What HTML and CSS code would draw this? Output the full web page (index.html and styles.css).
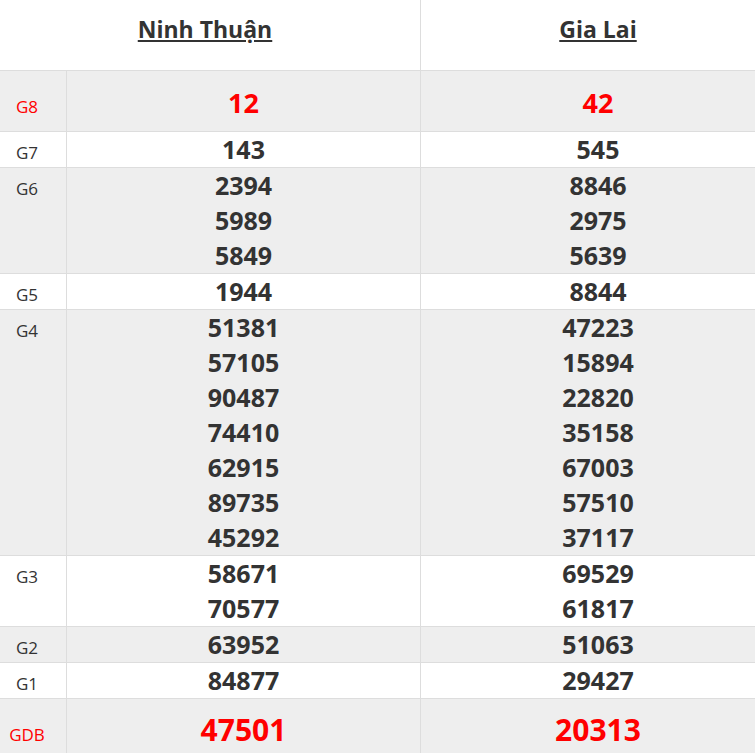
FILE: index.html
```html
<!DOCTYPE html>
<html lang="vi">
<head>
<meta charset="utf-8">
<title>Kết quả xổ số</title>
<link rel="stylesheet" href="styles.css">
</head>
<body>
<table class="kq">
  <colgroup><col class="c-lbl"><col class="c-p1"><col class="c-p2"></colgroup>
  <thead>
    <tr><th colspan="2" class="prov first">Ninh Thuận</th><th class="prov sep">Gia Lai</th></tr>
  </thead>
  <tbody>
    <tr class="alt g8"><td class="lbl red">G8</td><td class="num red">12</td><td class="num red">42</td></tr>
    <tr><td class="lbl">G7</td><td class="num">143</td><td class="num">545</td></tr>
    <tr class="alt"><td class="lbl">G6</td><td class="num"><div>2394</div><div>5989</div><div>5849</div></td><td class="num"><div>8846</div><div>2975</div><div>5639</div></td></tr>
    <tr><td class="lbl">G5</td><td class="num">1944</td><td class="num">8844</td></tr>
    <tr class="alt"><td class="lbl">G4</td><td class="num"><div>51381</div><div>57105</div><div>90487</div><div>74410</div><div>62915</div><div>89735</div><div>45292</div></td><td class="num"><div>47223</div><div>15894</div><div>22820</div><div>35158</div><div>67003</div><div>57510</div><div>37117</div></td></tr>
    <tr><td class="lbl">G3</td><td class="num"><div>58671</div><div>70577</div></td><td class="num"><div>69529</div><div>61817</div></td></tr>
    <tr class="alt"><td class="lbl">G2</td><td class="num">63952</td><td class="num">51063</td></tr>
    <tr><td class="lbl">G1</td><td class="num">84877</td><td class="num">29427</td></tr>
    <tr class="alt gdb"><td class="lbl red">GDB</td><td class="num red">47501</td><td class="num red">20313</td></tr>
  </tbody>
</table>
</body>
</html>
```
FILE: styles.css
```css
html, body {
  margin: 0;
  padding: 0;
  background: #fff;
  overflow: hidden;
}
body {
  font-family: "Open Sans", "Noto Sans", Arial, sans-serif;
  color: #333;
}
th, td {
  padding: 0;
  vertical-align: baseline;
}
.kq {
  border-collapse: separate;
  border-spacing: 0;
  table-layout: fixed;
  width: 775px;
}
.c-lbl { width: 66px; }
.c-p1 { width: 354px; }
.c-p2 { width: 355px; }

.kq .prov {
  font-size: 23px;
  font-weight: 700;
  line-height: 33px;
  text-decoration: underline;
  text-align: center;
  padding: 13px 0 24px;
}
.kq .first {
  padding-right: 10px;
}
.kq .sep {
  border-left: 1px solid #ddd;
}
.kq tbody td {
  border-top: 1px solid #ddd;
}
.alt {
  background: #eee;
}
.kq .lbl {
  font-size: 17px;
  line-height: 29px;
  text-align: center;
  padding-right: 12px;
}
.kq .num {
  border-left: 1px solid #ddd;
  text-align: center;
  font-size: 25px;
  font-weight: 700;
  line-height: 35px;
}
.kq .red {
  color: #f00;
}
.kq .g8 .num {
  font-size: 27px;
  padding-top: 14px;
  padding-bottom: 11px;
}
.kq .gdb .num {
  font-size: 30px;
  padding-top: 13px;
  padding-bottom: 12px;
}
```
